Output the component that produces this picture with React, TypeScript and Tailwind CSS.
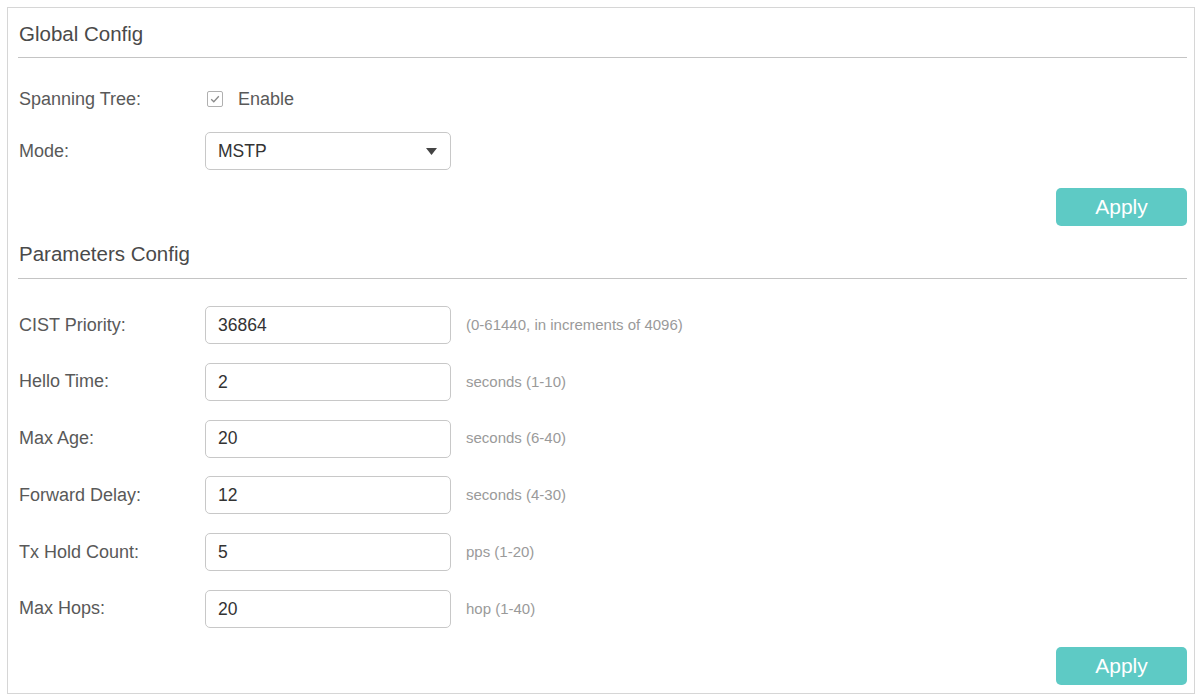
import React from "react";

const params = [
  { label: "CIST Priority:", value: "36864", hint: "(0-61440, in increments of 4096)" },
  { label: "Hello Time:", value: "2", hint: "seconds (1-10)" },
  { label: "Max Age:", value: "20", hint: "seconds (6-40)" },
  { label: "Forward Delay:", value: "12", hint: "seconds (4-30)" },
  { label: "Tx Hold Count:", value: "5", hint: "pps (1-20)" },
  { label: "Max Hops:", value: "20", hint: "hop (1-40)" },
];

const SectionTitle = ({ title, className }: { title: string; className: string }) => (
  <div className={`flex items-center border-b border-[#c4c4c4] pl-[1px] text-[20.5px] text-[#4a4a4a] ${className}`}>
    {title}
  </div>
);

const ApplyButton = ({ className }: { className: string }) => (
  <div className={`flex justify-end ${className}`}>
    <button className="h-[38px] w-[131px] rounded-[5px] bg-[#5ecac5] text-[21px] text-white">Apply</button>
  </div>
);

const Row = ({ label, children }: { label: string; children: React.ReactNode }) => (
  <div className="flex h-[38px] items-center">
    <div className="w-[187px] pl-[1px] text-[18px] text-[#595959]">{label}</div>
    {children}
  </div>
);

export default function App() {
  return (
    <div
      className="h-[695px] w-[1201px] bg-white pl-[7px] pt-[7px]"
      style={{ fontFamily: '"Liberation Sans", Arial, sans-serif' }}
    >
      <div className="h-[687px] w-[1188px] border border-[#d6d6d6] pl-[10px] pr-[7px]">
        <SectionTitle title="Global Config" className="h-[50px] pt-[4px]" />

        <div className="mt-[22px]">
          <Row label="Spanning Tree:">
            <div className="flex items-center">
              <div className="ml-[2px] flex h-[16px] w-[16px] items-center justify-center rounded-[2px] border border-[#b0b0b0]">
                <svg width="12" height="12" viewBox="0 0 12 12" fill="none">
                  <path d="M2.2 6.2 L4.8 8.8 L9.8 3.2" stroke="#8a8a8a" strokeWidth="1.3" />
                </svg>
              </div>
              <span className="ml-[15px] text-[18px] text-[#595959]">Enable</span>
            </div>
          </Row>
        </div>

        <div className="mt-[14px]">
          <Row label="Mode:">
            <div className="flex h-[38px] w-[246px] items-center justify-between rounded-[5px] border border-[#c8c8c8] pl-[12px] pr-[13px] text-[17.5px] text-[#333]">
              <span>MSTP</span>
              <svg width="11" height="7" viewBox="0 0 11 7">
                <path d="M0 0 H11 L5.5 7 Z" fill="#444" />
              </svg>
            </div>
          </Row>
        </div>

        <ApplyButton className="mt-[18px]" />

        <SectionTitle title="Parameters Config" className="h-[53px] pt-[5px]" />

        <div className="mt-[27px] flex flex-col gap-[18.8px]">
          {params.map((p) => (
            <Row key={p.label} label={p.label}>
              <div className="flex h-[38px] w-[246px] items-center rounded-[5px] border border-[#c8c8c8] pl-[12px] text-[17.5px] text-[#333]">
                {p.value}
              </div>
              <span className="ml-[15px] text-[15px] text-[#9a9a9a]">{p.hint}</span>
            </Row>
          ))}
        </div>

        <ApplyButton className="mt-[19px]" />
      </div>
    </div>
  );
}
